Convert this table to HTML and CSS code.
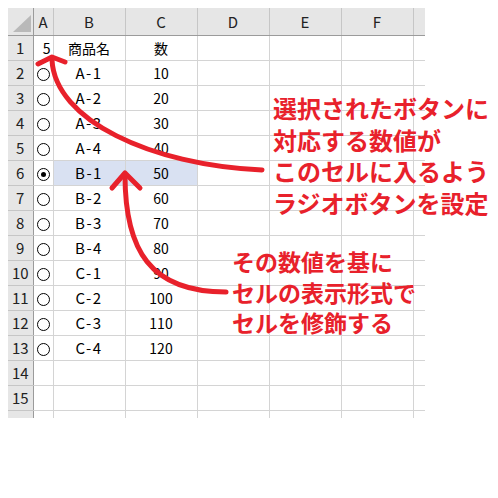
FILE: index.html
```html
<!DOCTYPE html>
<html lang="ja">
<head>
    <meta charset="UTF-8">
    <meta name="viewport" content="width=device-width, initial-scale=1.0">
    <title>ラジオボタン</title>
    <link rel="stylesheet" href="styles.css">
</head>
<body>
    <div class="page">
        <div class="sheet">
            <table class="grid">
                <colgroup>
                    <col class="w-head">
                    <col class="w-a">
                    <col class="w-col">
                    <col class="w-col">
                    <col class="w-col">
                    <col class="w-col">
                    <col class="w-col">
                    <col class="w-stub">
                </colgroup>
                <thead>
                    <tr>
                        <th class="corner"><span class="tri"></span></th>
                        <th>A</th><th>B</th><th>C</th><th>D</th><th>E</th><th>F</th><th class="stub"></th>
                    </tr>
                </thead>
                <tbody>
                    <tr><th>1</th><td class="num">5</td><td class="c">商品名</td><td class="c">数</td><td></td><td></td><td></td><td class="stub"></td></tr>
                    <tr><th>2</th><td class="c"><span class="radio"></span></td><td class="c code">A-1</td><td class="c">10</td><td></td><td></td><td></td><td class="stub"></td></tr>
                    <tr><th>3</th><td class="c"><span class="radio"></span></td><td class="c code">A-2</td><td class="c">20</td><td></td><td></td><td></td><td class="stub"></td></tr>
                    <tr><th>4</th><td class="c"><span class="radio"></span></td><td class="c code">A-3</td><td class="c">30</td><td></td><td></td><td></td><td class="stub"></td></tr>
                    <tr><th>5</th><td class="c"><span class="radio"></span></td><td class="c code">A-4</td><td class="c">40</td><td></td><td></td><td></td><td class="stub"></td></tr>
                    <tr><th>6</th><td class="c"><span class="radio on"></span></td><td class="c code pick">B-1</td><td class="c pick">50</td><td></td><td></td><td></td><td class="stub"></td></tr>
                    <tr><th>7</th><td class="c"><span class="radio"></span></td><td class="c code">B-2</td><td class="c">60</td><td></td><td></td><td></td><td class="stub"></td></tr>
                    <tr><th>8</th><td class="c"><span class="radio"></span></td><td class="c code">B-3</td><td class="c">70</td><td></td><td></td><td></td><td class="stub"></td></tr>
                    <tr><th>9</th><td class="c"><span class="radio"></span></td><td class="c code">B-4</td><td class="c">80</td><td></td><td></td><td></td><td class="stub"></td></tr>
                    <tr><th>10</th><td class="c"><span class="radio"></span></td><td class="c code">C-1</td><td class="c">90</td><td></td><td></td><td></td><td class="stub"></td></tr>
                    <tr><th>11</th><td class="c"><span class="radio"></span></td><td class="c code">C-2</td><td class="c">100</td><td></td><td></td><td></td><td class="stub"></td></tr>
                    <tr><th>12</th><td class="c"><span class="radio"></span></td><td class="c code">C-3</td><td class="c">110</td><td></td><td></td><td></td><td class="stub"></td></tr>
                    <tr><th>13</th><td class="c"><span class="radio"></span></td><td class="c code">C-4</td><td class="c">120</td><td></td><td></td><td></td><td class="stub"></td></tr>
                    <tr><th>14</th><td></td><td></td><td></td><td></td><td></td><td></td><td class="stub"></td></tr>
                    <tr><th>15</th><td></td><td></td><td></td><td></td><td></td><td></td><td class="stub"></td></tr>
                    <tr><th>16</th><td></td><td></td><td></td><td></td><td></td><td></td><td class="stub"></td></tr>
                </tbody>
            </table>
        </div>

        <!-- arrows drawn over the sheet -->
        <svg class="arrows" viewBox="0 0 498 498" width="498" height="498">
            <path d="M262 170 C150 165 55 120 52 60"/>
            <path d="M38 64 L52 57 L65 62"/>
            <path d="M226 292 C150 292 125 250 125 175"/>
            <path d="M112 188 L125 173 L140 188"/>
        </svg>

        <div class="note note-top">選択されたボタンに<br>対応する数値が<br>このセルに入るよう<br>ラジオボタンを設定</div>
        <div class="note note-bottom">その数値を基に<br>セルの表示形式で<br>セルを修飾する</div>
    </div>
</body>
</html>
```

FILE: styles.css
```css
body {
    margin: 0;
    background-color: #fff;
    font-family: "Noto Sans CJK JP", "Noto Sans", sans-serif;
}
.page {
    position: relative;
    width: 498px;
    height: 498px;
    overflow: hidden;
}
.sheet {
    position: absolute;
    left: 8px;
    top: 8px;
    width: 417px;
    height: 410px;
    overflow: hidden;
}
.grid {
    border-collapse: collapse;
    table-layout: fixed;
    width: 417px;
    font-size: 14px;
    color: #000;
}
.w-head { width: 25px; }
.w-a { width: 20px; }
.w-col { width: 72px; }
.w-stub { width: 12px; }
.grid td {
    height: 24px;
    padding: 0 2px;
    border: 1px solid #d4d4d4;
    line-height: 24px;
    white-space: nowrap;
    overflow: hidden;
}
.grid tbody th {
    height: 24px;
    padding: 0;
    background-color: #e6e6e6;
    border: 1px solid #c6c6c6;
    border-left: none;
    border-right: 1px solid #9b9b9b;
    font-weight: normal;
    font-size: 15px;
    color: #222;
    line-height: 24px;
}
.grid thead th {
    height: 27px;
    padding: 0;
    background-color: #e6e6e6;
    border-top: none;
    border-left: 1px solid #c6c6c6;
    border-right: 1px solid #c6c6c6;
    border-bottom: 1px solid #9b9b9b;
    font-weight: normal;
    font-size: 15px;
    color: #222;
    line-height: 27px;
}
.grid thead th.corner {
    position: relative;
    border-left: none;
    border-right: 1px solid #9b9b9b;
}
.tri {
    position: absolute;
    right: 2px;
    bottom: 3px;
    width: 0;
    height: 0;
    border-left: 18px solid transparent;
    border-bottom: 17px solid #b9b9b9;
}
.grid td.stub,
.grid thead th.stub {
    border-right: none;
}
.c { text-align: center; }
.num { text-align: right; }
.code {
    font-size: 15px;
    letter-spacing: 1.5px;
}
.pick { background-color: #d9e1f2; }
.radio {
    display: inline-block;
    width: 11px;
    height: 11px;
    border: 1px solid #000;
    border-radius: 50%;
    vertical-align: middle;
    position: relative;
    top: -1px;
    box-sizing: content-box;
}
.radio.on::after {
    content: "";
    position: absolute;
    left: 3px;
    top: 3px;
    width: 5px;
    height: 5px;
    border-radius: 50%;
    background-color: #000;
}
.arrows {
    position: absolute;
    left: 0;
    top: 0;
}
.arrows path {
    fill: none;
    stroke: #e8212b;
    stroke-width: 5;
    stroke-linecap: round;
    stroke-linejoin: round;
}
.note {
    position: absolute;
    color: #e8212b;
    font-weight: 700;
    white-space: nowrap;
}
.note-top {
    left: 273px;
    top: 92px;
    font-size: 24px;
    line-height: 31.5px;
}
.note-bottom {
    left: 232px;
    top: 246px;
    font-size: 23px;
    line-height: 30.5px;
}
```
